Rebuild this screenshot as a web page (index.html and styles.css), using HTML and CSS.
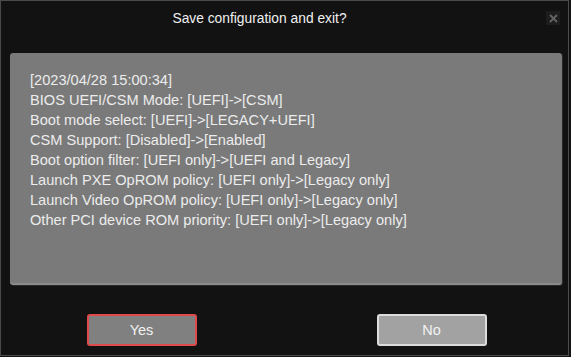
FILE: index.html
```html
<!DOCTYPE html>
<html>
<head>
<meta charset="utf-8">
<link rel="stylesheet" href="styles.css">
</head>
<body>
<div class="dialog">
  <div class="header">
    <div class="title">Save configuration and exit?</div>
    <div class="close" aria-label="close">
      <svg width="9" height="9" viewBox="0 0 9 9"><path d="M1 1L8 8M8 1L1 8" stroke="#636363" stroke-width="1.8" fill="none"/></svg>
    </div>
  </div>
  <div class="panel">
    <div class="line">[2023/04/28 15:00:34]</div>
    <div class="line">BIOS UEFI/CSM Mode: [UEFI]-&gt;[CSM]</div>
    <div class="line">Boot mode select: [UEFI]-&gt;[LEGACY+UEFI]</div>
    <div class="line">CSM Support: [Disabled]-&gt;[Enabled]</div>
    <div class="line">Boot option filter: [UEFI only]-&gt;[UEFI and Legacy]</div>
    <div class="line">Launch PXE OpROM policy: [UEFI only]-&gt;[Legacy only]</div>
    <div class="line">Launch Video OpROM policy: [UEFI only]-&gt;[Legacy only]</div>
    <div class="line">Other PCI device ROM priority: [UEFI only]-&gt;[Legacy only]</div>
  </div>
  <div class="buttons">
    <div class="btn btn-yes">Yes</div>
    <div class="btn btn-no">No</div>
  </div>
</div>
</body>
</html>
```
FILE: styles.css
```css
html, body {
  margin: 0;
  padding: 0;
  background: #121212;
}
.dialog {
  width: 569px;
  height: 356px;
  box-sizing: border-box;
  border: 1px solid #4a4a4a;
  background: #121212;
  display: flex;
  flex-direction: column;
  font-family: "Liberation Sans", Arial, sans-serif;
  color: #e8e8e8;
}
.header {
  position: relative;
  height: 52px;
}
.title {
  text-align: center;
  font-size: 13.8px;
  line-height: 35px;
  color: #f0f0f0;
  padding-right: 50px;
}
.close {
  position: absolute;
  right: 8px;
  top: 10px;
  width: 14px;
  height: 14px;
  background: #1d1d1d;
  display: flex;
  align-items: center;
  justify-content: center;
}
.panel {
  margin: 0 6px 0 9px;
  height: 232px;
  box-sizing: border-box;
  background: #7a7a7a;
  border-radius: 3px;
  border-bottom: 2px solid #8a8a8a;
  box-shadow: 1px 1px 0 #2a2a2a;
  padding: 17px 20px 0 20px;
}
.line {
  font-size: 14.6px;
  line-height: 20px;
  color: #ececec;
  white-space: nowrap;
}
.buttons {
  display: flex;
  justify-content: center;
  gap: 180px;
  margin-top: 29px;
  padding-left: 4px;
}
.btn {
  width: 110px;
  height: 32px;
  box-sizing: border-box;
  border-radius: 3px;
  display: flex;
  align-items: center;
  justify-content: center;
  font-size: 14.5px;
  color: #f2f2f2;
}
.btn-yes {
  background: #808080;
  border: 2px solid #e04a4a;
}
.btn-no {
  background: #a2a2a2;
  border: 2px solid #dcdcdc;
}
```
